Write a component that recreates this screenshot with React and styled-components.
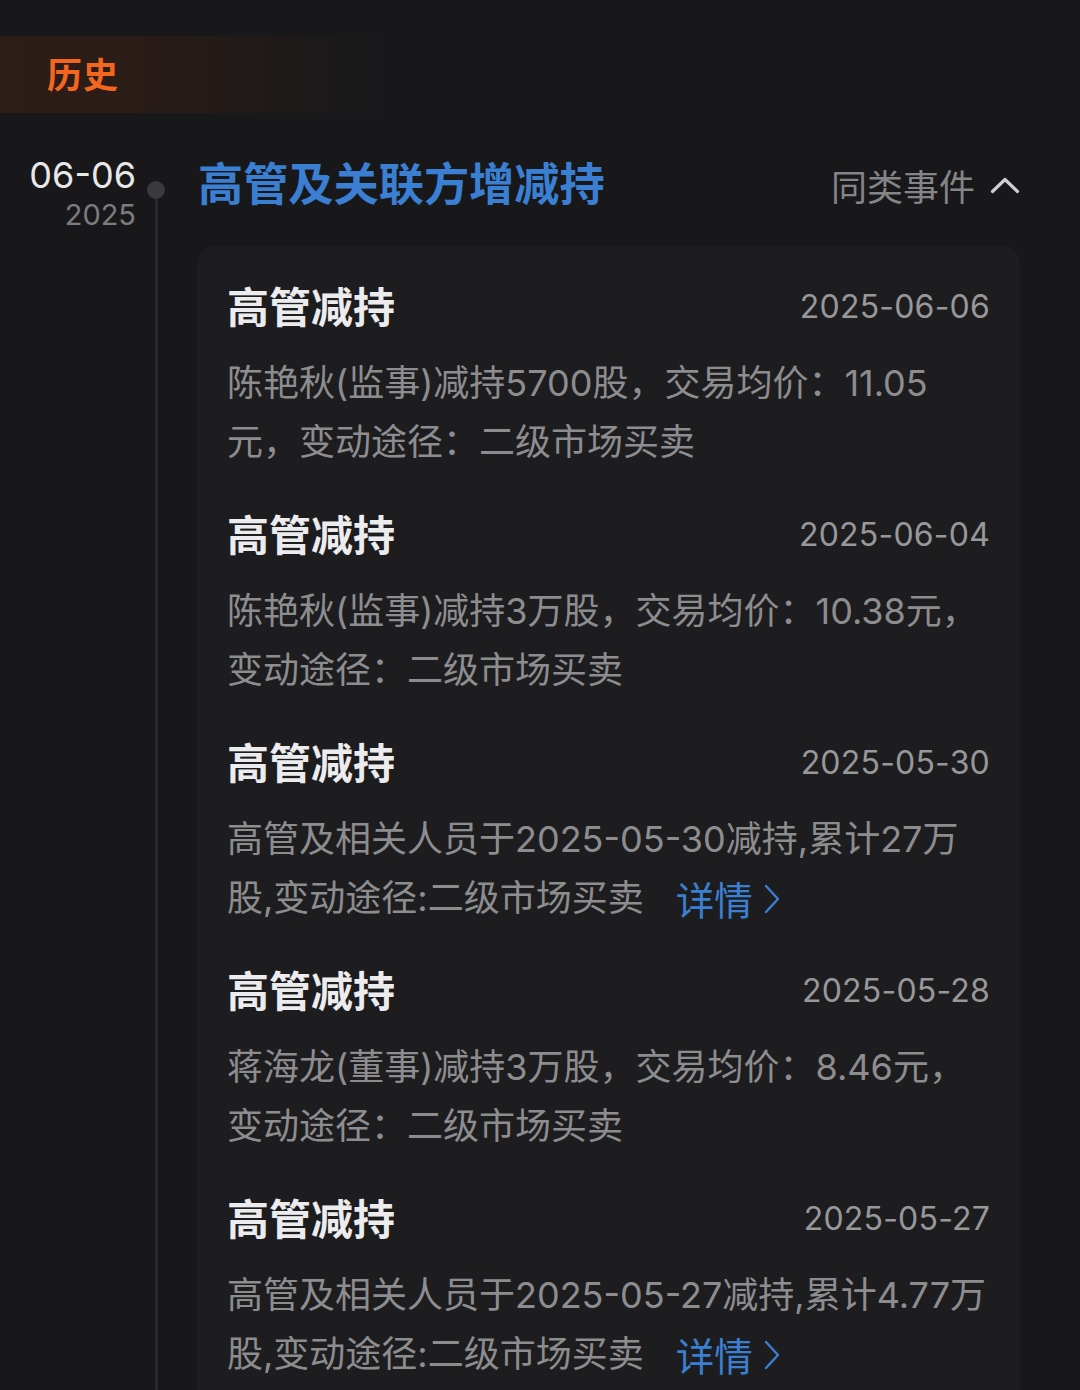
import React from "react";
import styled, { createGlobalStyle } from "styled-components";

const GlobalStyle = createGlobalStyle`
  html, body {
    margin: 0;
    padding: 0;
    background: #18181a;
  }
  body {
    font-family: "Noto Sans CJK SC", "Noto Sans", sans-serif;
    -webkit-font-smoothing: antialiased;
  }
`;

const LATIN = `Inter, "Noto Sans CJK SC", sans-serif`;

const Page = styled.div`
  height: 1390px;
  overflow: hidden;
  padding-top: 36px;
  box-sizing: border-box;
  background: #18181a;
`;

const SectionBar = styled.div`
  height: 77px;
  box-sizing: border-box;
  padding: 0 0 5px 47px;
  display: flex;
  align-items: center;
  background: linear-gradient(
    90deg,
    #2d1d17 0%,
    #2a1c17 12%,
    #221a18 22%,
    #1b191a 30%,
    #18181a 36%
  );
`;

const SectionTitle = styled.span`
  font-size: 35px;
  font-weight: 700;
  color: #f2661f;
  letter-spacing: 1px;
`;

const EventRow = styled.div`
  display: flex;
  align-items: stretch;
  min-height: 1300px;
`;

const DateBlock = styled.div`
  width: 136px;
  flex: none;
  margin-top: 40px;
  display: flex;
  flex-direction: column;
  align-items: flex-end;
`;

const DayText = styled.span`
  font-family: ${LATIN};
  font-size: 36px;
  line-height: 44px;
  color: #e8e8e8;
`;

const YearText = styled.span`
  font-family: ${LATIN};
  font-size: 29px;
  line-height: 36px;
  color: #7c7c7e;
`;

const Rail = styled.div`
  width: 18px;
  flex: none;
  margin-left: 11px;
  padding-top: 68px;
  display: flex;
  flex-direction: column;
  align-items: center;
`;

const Dot = styled.div`
  width: 18px;
  height: 18px;
  border-radius: 50%;
  background: #3a3a3c;
  flex: none;
`;

const RailLine = styled.div`
  width: 3px;
  flex: 1;
  background: #28282a;
`;

const Main = styled.div`
  flex: 1;
  margin-left: 32px;
  margin-right: 60px;
  padding-top: 39px;
  display: flex;
  flex-direction: column;
`;

const HeaderRow = styled.div`
  height: 60px;
  display: flex;
  align-items: center;
  justify-content: space-between;
  padding-left: 1px;
`;

const EventTitle = styled.h2`
  margin: 0;
  font-size: 45.2px;
  line-height: 60px;
  font-weight: 700;
  color: #3a7fd2;
`;

const SimilarToggle = styled.div`
  display: flex;
  align-items: center;
  gap: 15px;
  color: #858587;
  font-size: 36px;
  margin-top: 6px;
`;

const Card = styled.div`
  margin-top: 34px;
  background: #1d1d1f;
  border-radius: 18px;
  padding: 30px 31px 0 32px;
`;

const Item = styled.div`
  padding-bottom: 32px;
`;

const ItemHead = styled.div`
  height: 56px;
  display: flex;
  align-items: center;
  justify-content: space-between;
`;

const ItemTitle = styled.span`
  font-size: 42px;
  font-weight: 700;
  color: #ececee;
  margin-left: -2px;
`;

const ItemDate = styled.span`
  font-family: ${LATIN};
  font-size: 32px;
  color: #98989a;
  letter-spacing: 0.2px;
  margin: 5px -1px 0 0;
`;

const ItemBody = styled.p`
  margin: 22px 0 0 -2px;
  font-family: ${LATIN};
  font-size: 36px;
  line-height: 59px;
  color: #8d8d8f;
`;

const DetailLink = styled.a`
  display: inline-flex;
  align-items: center;
  gap: 10px;
  margin-left: 32px;
  color: #3a7fd2;
  font-family: "Noto Sans CJK SC", sans-serif;
  font-size: 38.5px;
  text-decoration: none;
  vertical-align: top;
`;

const ChevronUp = () => (
  <svg width="30" height="18" viewBox="0 0 30 18" fill="none">
    <path d="M2.5 15.5 L15 3.5 L27.5 15.5" stroke="#cfcfd1" strokeWidth="3.2" strokeLinecap="round" strokeLinejoin="round" />
  </svg>
);

const ChevronRight = () => (
  <svg width="18" height="32" viewBox="0 0 18 32" fill="none">
    <path d="M3 3 L15 16 L3 29" stroke="#3a7fd2" strokeWidth="2.4" strokeLinecap="round" strokeLinejoin="round" />
  </svg>
);

const items = [
  {
    date: "2025-06-06",
    lines: ["陈艳秋(监事)减持5700股，交易均价：11.05", "元，变动途径：二级市场买卖"],
  },
  {
    date: "2025-06-04",
    lines: ["陈艳秋(监事)减持3万股，交易均价：10.38元，", "变动途径：二级市场买卖"],
  },
  {
    date: "2025-05-30",
    lines: ["高管及相关人员于2025-05-30减持,累计27万", "股,变动途径:二级市场买卖"],
    detail: true,
  },
  {
    date: "2025-05-28",
    lines: ["蒋海龙(董事)减持3万股，交易均价：8.46元，", "变动途径：二级市场买卖"],
  },
  {
    date: "2025-05-27",
    lines: ["高管及相关人员于2025-05-27减持,累计4.77万", "股,变动途径:二级市场买卖"],
    detail: true,
  },
];

export default function App() {
  return (
    <>
      <GlobalStyle />
      <Page>
        <SectionBar>
          <SectionTitle>历史</SectionTitle>
        </SectionBar>
        <EventRow>
          <DateBlock>
            <DayText>06-06</DayText>
            <YearText>2025</YearText>
          </DateBlock>
          <Rail>
            <Dot />
            <RailLine />
          </Rail>
          <Main>
            <HeaderRow>
              <EventTitle>高管及关联方增减持</EventTitle>
              <SimilarToggle>
                <span>同类事件</span>
                <ChevronUp />
              </SimilarToggle>
            </HeaderRow>
            <Card>
              {items.map((it) => (
                <Item key={it.date}>
                  <ItemHead>
                    <ItemTitle>高管减持</ItemTitle>
                    <ItemDate>{it.date}</ItemDate>
                  </ItemHead>
                  <ItemBody>
                    {it.lines[0]}
                    <br />
                    {it.lines[1]}
                    {it.detail && (
                      <DetailLink href="#">
                        <span>详情</span>
                        <ChevronRight />
                      </DetailLink>
                    )}
                  </ItemBody>
                </Item>
              ))}
            </Card>
          </Main>
        </EventRow>
      </Page>
    </>
  );
}
